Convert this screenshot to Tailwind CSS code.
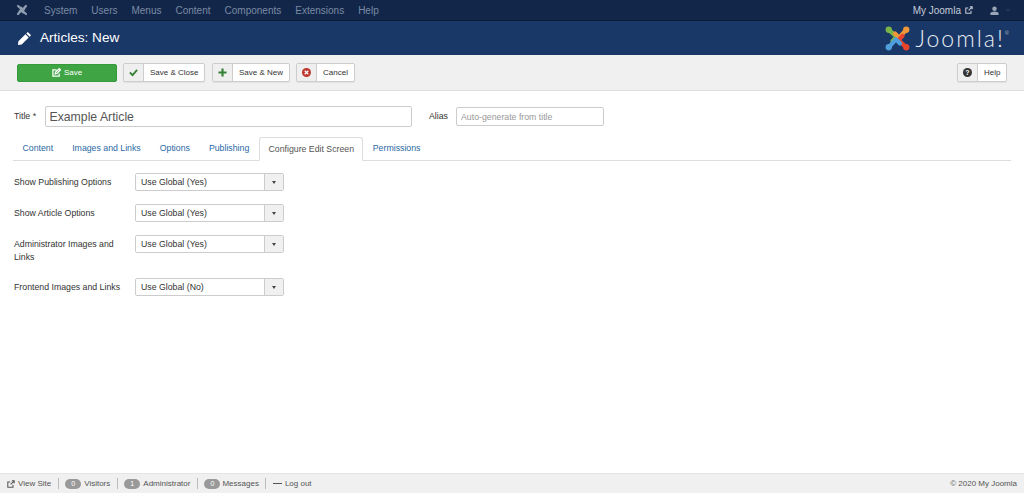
<!DOCTYPE html>
<html lang="en">
<head>
<meta charset="UTF-8">
<title>Articles: New</title>
<script src="https://cdn.jsdelivr.net/npm/@tailwindcss/browser@4"></script>
</head>
<body class="bg-white font-['Liberation_Sans',Arial,sans-serif] text-[#333]">
<div class="flex flex-col h-[493px] w-[1024px] overflow-hidden">

  <!-- Top nav -->
  <nav class="h-[21px] bg-[#12264a] border-b border-[#0c1b36] flex items-center text-[10px] text-[#7a8ba3] shrink-0">
    <svg class="w-[12px] h-[12px] ml-[16px] mr-[16px]" viewBox="0 0 30 30" fill="none" stroke="#8f9db1" stroke-width="5.5" stroke-linecap="round" stroke-linejoin="round">
      <path d="M5 5 L14 13 L9 18 M25 5 L17 14 L12 9 M25 25 L16 17 L21 12 M5 25 L13 16 L18 21"/>
    </svg>
    <div class="flex gap-[14px]">
      <span>System</span><span>Users</span><span>Menus</span><span>Content</span><span>Components</span><span>Extensions</span><span>Help</span>
    </div>
    <div class="ml-auto flex items-center text-[#c3cbd6]">
      <span>My Joomla</span>
      <svg class="w-[8px] h-[8px] ml-[4px]" viewBox="0 0 10 10" fill="none" stroke="#c3cbd6" stroke-width="1.3"><path d="M7.5 6 V9 H1 V2.5 H4 M4.5 5.5 L9 1 M6 1 H9 V4"/></svg>
      <svg class="w-[9px] h-[9px] ml-[17px]" viewBox="0 0 10 10" fill="#9aa6b6"><circle cx="5" cy="3" r="2.5"/><path d="M0.5 10 V8 Q1 6 5 6 Q9 6 9.5 8 V10 Z"/></svg>
      <span class="ml-[6px] mr-[13px] w-0 h-0 border-x-[3px] border-x-transparent border-t-[3px] border-t-[#1f3557]"></span>
    </div>
  </nav>

  <!-- Title bar -->
  <header class="h-[34px] bg-[#1a3867] flex items-center shrink-0">
    <svg class="w-[15px] h-[15px] ml-[17px]" viewBox="0 0 16 16" fill="#fff"><path d="M11.5 1 L15 4.5 L13.4 6.1 L9.9 2.6 Z M9 3.5 L12.5 7 L5 14.5 L1 15 L1.5 11 Z"/></svg>
    <h1 class="ml-[8px] text-[13.6px] leading-none text-white">Articles: New</h1>
    <div class="ml-auto mr-[15px] flex items-center">
      <svg class="w-[27px] h-[25px]" viewBox="0 0 30 30" fill="none" stroke-width="5" stroke-linecap="round" stroke-linejoin="round">
        <path d="M5 5 L14 13 L9 18" stroke="#7ab648"/>
        <path d="M25 5 L17 14 L12 9" stroke="#f0973a"/>
        <path d="M25 25 L16 17 L21 12" stroke="#e8452c"/>
        <path d="M5 25 L13 16 L18 21" stroke="#4f9fdc"/>
        <circle cx="4.5" cy="4.5" r="3.8" fill="#7ab648"/>
        <circle cx="25.5" cy="4.5" r="3.8" fill="#f0973a"/>
        <circle cx="25.5" cy="25.5" r="3.8" fill="#e8452c"/>
        <circle cx="4.5" cy="25.5" r="3.8" fill="#4f9fdc"/>
      </svg>
      <span class="ml-[4px] font-['Lato',sans-serif] font-light text-[23px] leading-none text-[#e8edf3] tracking-[2px]">Joomla!<sup class="text-[5px] align-super tracking-normal">®</sup></span>
    </div>
  </header>

  <!-- Toolbar -->
  <div class="h-[36px] bg-[#f0f0f0] border-b border-[#dedede] flex items-center pl-[17px] pr-[17px] text-[8px] shrink-0">
    <button class="w-[100px] h-[18px] rounded-[2px] bg-[#3fa544] border border-[#359a3a] text-white flex items-center justify-center gap-[3px]">
      <svg class="w-[9px] h-[9px]" viewBox="0 0 10 10" fill="none" stroke="#fff" stroke-width="1.4"><path d="M8 6 V9 H1 V2 H5 M3.5 6.5 L4 4.5 L8 0.8 L9.4 2 L5.5 6 Z"/></svg>
      Save
    </button>
    <button class="ml-[6px] w-[82px] h-[19px] rounded-[2px] bg-white border border-[#cdcdcd] shadow-[0_1px_1px_rgba(0,0,0,0.06)] flex items-stretch">
      <span class="w-[20px] bg-[#efefef] border-r border-[#cdcdcd] flex items-center justify-center">
        <svg class="w-[9px] h-[9px]" viewBox="0 0 10 10" fill="none" stroke="#378137" stroke-width="2"><path d="M1 5 L4 8 L9 2"/></svg>
      </span>
      <span class="flex-1 flex items-center pl-[6px]">Save &amp; Close</span>
    </button>
    <button class="ml-[7px] w-[78px] h-[19px] rounded-[2px] bg-white border border-[#cdcdcd] shadow-[0_1px_1px_rgba(0,0,0,0.06)] flex items-stretch">
      <span class="w-[20px] bg-[#efefef] border-r border-[#cdcdcd] flex items-center justify-center">
        <svg class="w-[9px] h-[9px]" viewBox="0 0 10 10" fill="none" stroke="#378137" stroke-width="2.4"><path d="M5 0.5 V9.5 M0.5 5 H9.5"/></svg>
      </span>
      <span class="flex-1 flex items-center pl-[6px]">Save &amp; New</span>
    </button>
    <button class="ml-[6px] w-[59px] h-[19px] rounded-[2px] bg-white border border-[#cdcdcd] shadow-[0_1px_1px_rgba(0,0,0,0.06)] flex items-stretch">
      <span class="w-[20px] bg-[#efefef] border-r border-[#cdcdcd] flex items-center justify-center">
        <svg class="w-[9px] h-[9px]" viewBox="0 0 10 10"><circle cx="5" cy="5" r="5" fill="#bd362f"/><path d="M3 3 L7 7 M7 3 L3 7" stroke="#fff" stroke-width="1.4"/></svg>
      </span>
      <span class="flex-1 flex items-center pl-[6px]">Cancel</span>
    </button>
    <button class="ml-auto w-[50px] h-[19px] rounded-[2px] bg-white border border-[#cdcdcd] shadow-[0_1px_1px_rgba(0,0,0,0.06)] flex items-stretch">
      <span class="w-[20px] bg-[#efefef] border-r border-[#cdcdcd] flex items-center justify-center">
        <span class="w-[9px] h-[9px] rounded-full bg-[#333] text-white text-[7px] font-bold leading-[9px] text-center">?</span>
      </span>
      <span class="flex-1 flex items-center pl-[6px]">Help</span>
    </button>
  </div>

  <!-- Main -->
  <main class="flex-1 pl-[13px] pr-[13px]">
    <div class="flex items-center h-[21px] mt-[15px] text-[8.75px]">
      <label class="w-[32px] pl-[1px]">Title *</label>
      <input class="w-[367px] h-[21px] border border-[#ccc] rounded-[2px] px-[3.5px] text-[12.25px] text-[#555]" value="Example Article">
      <label class="ml-[17px] w-[27px]">Alias</label>
      <input class="w-[148px] h-[19px] border border-[#ccc] rounded-[2px] px-[4px] text-[8.75px] placeholder:text-[#999]" placeholder="Auto-generate from title">
    </div>

    <div class="flex items-end h-[24px] mt-[10px] border-b border-[#ddd] text-[8.75px] text-[#2a69a3] w-[998px]">
      <a class="px-[9.5px] h-[23px] leading-[23px]">Content</a>
      <a class="px-[9.5px] h-[23px] leading-[23px]">Images and Links</a>
      <a class="px-[9.5px] h-[23px] leading-[23px]">Options</a>
      <a class="px-[9.5px] h-[23px] leading-[23px]">Publishing</a>
      <a class="ml-[0.5px] w-[104px] h-[24px] leading-[23px] text-center text-[#555] bg-white border border-[#ddd] border-b-white rounded-t-[3px] -mb-px">Configure Edit Screen</a>
      <a class="px-[9.5px] h-[23px] leading-[23px]">Permissions</a>
    </div>

    <!-- Options -->
    <div class="mt-[12px] flex flex-col text-[8.75px]">
      <div class="flex items-start h-[31px]">
        <label class="w-[122px] pl-[1px] leading-[18px]">Show Publishing Options</label>
        <div class="w-[149px] h-[18px] border border-[#ccc] rounded-[2px] flex items-stretch">
          <span class="flex-1 px-[5px] leading-[16px]">Use Global (Yes)</span>
          <span class="w-[19px] bg-[#f0f0f0] border-l border-[#ccc] flex items-center justify-center"><span class="w-0 h-0 border-x-[2.5px] border-x-transparent border-t-[3px] border-t-[#444]"></span></span>
        </div>
      </div>
      <div class="flex items-start h-[31px]">
        <label class="w-[122px] pl-[1px] leading-[18px]">Show Article Options</label>
        <div class="w-[149px] h-[18px] border border-[#ccc] rounded-[2px] flex items-stretch">
          <span class="flex-1 px-[5px] leading-[16px]">Use Global (Yes)</span>
          <span class="w-[19px] bg-[#f0f0f0] border-l border-[#ccc] flex items-center justify-center"><span class="w-0 h-0 border-x-[2.5px] border-x-transparent border-t-[3px] border-t-[#444]"></span></span>
        </div>
      </div>
      <div class="flex items-start h-[43px]">
        <label class="w-[122px] pl-[1px] pt-[3px] leading-[13px] pr-[4px]">Administrator Images and Links</label>
        <div class="w-[149px] h-[18px] border border-[#ccc] rounded-[2px] flex items-stretch">
          <span class="flex-1 px-[5px] leading-[16px]">Use Global (Yes)</span>
          <span class="w-[19px] bg-[#f0f0f0] border-l border-[#ccc] flex items-center justify-center"><span class="w-0 h-0 border-x-[2.5px] border-x-transparent border-t-[3px] border-t-[#444]"></span></span>
        </div>
      </div>
      <div class="flex items-start h-[18px]">
        <label class="w-[122px] pl-[1px] leading-[18px]">Frontend Images and Links</label>
        <div class="w-[149px] h-[18px] border border-[#ccc] rounded-[2px] flex items-stretch">
          <span class="flex-1 px-[5px] leading-[16px]">Use Global (No)</span>
          <span class="w-[19px] bg-[#f0f0f0] border-l border-[#ccc] flex items-center justify-center"><span class="w-0 h-0 border-x-[2.5px] border-x-transparent border-t-[3px] border-t-[#444]"></span></span>
        </div>
      </div>
    </div>
  </main>

  <!-- Status bar -->
  <footer class="h-[20px] bg-[#f0f0f0] border-t border-[#e4e4e4] flex items-center pl-[7px] pr-[7px] text-[8px] text-[#555] shrink-0">
    <svg class="w-[8px] h-[8px] mr-[3px]" viewBox="0 0 10 10" fill="none" stroke="#555" stroke-width="1.3"><path d="M7.5 6 V9 H1 V2.5 H4 M4.5 5.5 L9 1 M6 1 H9 V4"/></svg>
    <span>View Site</span>
    <span class="mx-[6.5px] w-px h-[11px] bg-[#bbb]"></span>
    <span class="w-[16px] h-[10px] rounded-full bg-[#999] text-white text-[7px] leading-[10px] text-center mr-[3px]">0</span>
    <span>Visitors</span>
    <span class="mx-[6.5px] w-px h-[11px] bg-[#bbb]"></span>
    <span class="w-[16px] h-[10px] rounded-full bg-[#999] text-white text-[7px] leading-[10px] text-center mr-[3px]">1</span>
    <span>Administrator</span>
    <span class="mx-[6.5px] w-px h-[11px] bg-[#bbb]"></span>
    <span class="w-[16px] h-[10px] rounded-full bg-[#999] text-white text-[7px] leading-[10px] text-center mr-[2px]">0</span>
    <span>Messages</span>
    <span class="mx-[6.5px] w-px h-[11px] bg-[#bbb]"></span>
    <span class="w-[9px] h-[1.5px] bg-[#555] mr-[3px]"></span>
    <span>Log out</span>
    <span class="ml-auto">© 2020 My Joomla</span>
  </footer>
</div>
</body>
</html>
